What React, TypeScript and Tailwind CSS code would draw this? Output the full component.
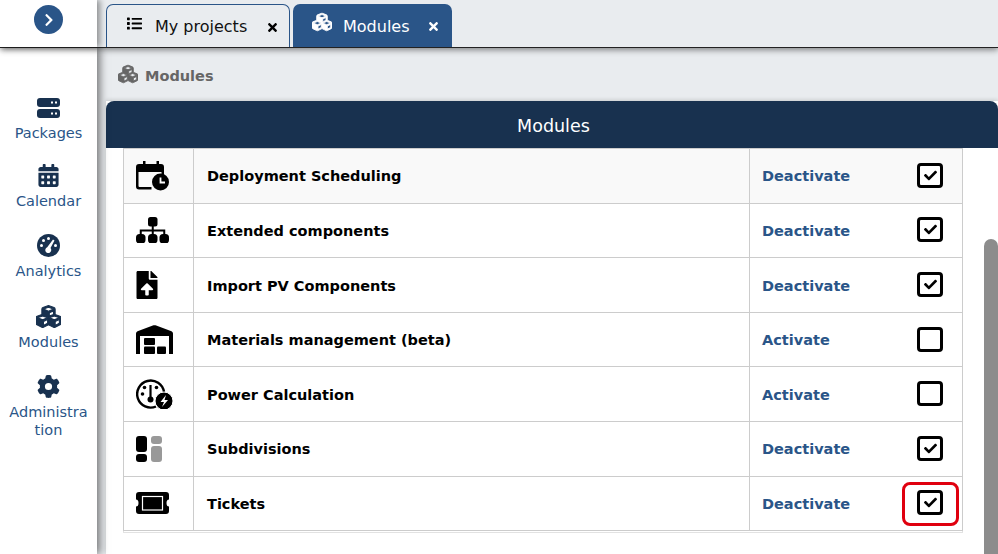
import { FaChevronRight, FaCubes, FaList, FaTimes, FaCalendarAlt, FaFileUpload, FaCheck } from "react-icons/fa";
import { FaGear } from "react-icons/fa6";

const navy = "#18314f";

function PackagesIcon() {
  return (
    <svg width="23" height="20" viewBox="0 0 23 20">
      <rect x="0" y="0" width="23" height="9" rx="3" fill={navy} />
      <rect x="0" y="11" width="23" height="9" rx="3" fill={navy} />
      <rect x="14" y="3.500" width="2" height="2" fill="#fff" />
      <rect x="18" y="3.500" width="2" height="2" fill="#fff" />
      <rect x="14" y="14.500" width="2" height="2" fill="#fff" />
      <rect x="18" y="14.500" width="2" height="2" fill="#fff" />
    </svg>
  );
}

function GaugeIcon() {
  return (
    <svg width="23" height="23" viewBox="0 0 23 23">
      <circle cx="11.500" cy="11.500" r="11.500" fill={navy} />
      <circle cx="11.500" cy="4.500" r="1.500" fill="#fff" />
      <circle cx="6.500" cy="6.500" r="1.500" fill="#fff" />
      <circle cx="4.500" cy="11.500" r="1.500" fill="#fff" />
      <circle cx="18.500" cy="11.500" r="1.500" fill="#fff" />
      <path d="M16 5.500 L17.500 6.500 L13.500 14 A3 3 0 1 1 10.200 13.200 Z" fill="#fff" />
    </svg>
  );
}

function CalendarClockIcon() {
  return (
    <svg width="33" height="30" viewBox="0 0 33 30">
      <path d="M7 0h2.500v3h11V0H23v3h2a3 3 0 0 1 3 3v8h-2.500v-3h-23v14a1 1 0 0 0 1 1h12v2.500H3a3 3 0 0 1-3-3V6a3 3 0 0 1 3-3h4z" fill="#000" />
      <circle cx="24.500" cy="21" r="8.500" fill="#000" />
      <path d="M24.500 16.500V21.500H29" stroke="#fff" strokeWidth="1.800" fill="none" />
    </svg>
  );
}

function SitemapIcon() {
  return (
    <svg width="33" height="26" viewBox="0 0 33 26">
      <rect x="12" y="0" width="9.500" height="9.500" rx="2.500" fill="#000" />
      <rect x="0" y="17" width="9.500" height="9.500" rx="3.500" fill="#000" />
      <rect x="12" y="17" width="9.500" height="9.500" rx="3.500" fill="#000" />
      <rect x="23.500" y="17" width="9.500" height="9.500" rx="3.500" fill="#000" />
      <path d="M16.750 9V18M4.750 18V13.500H28.250V18" stroke="#000" strokeWidth="2" fill="none" />
    </svg>
  );
}

function WarehouseIcon() {
  return (
    <svg width="37" height="29" viewBox="0 0 37 29">
      <path d="M0 8.500 Q0 7 1.500 6.300 L17.500 0.300 Q18.500 0 19.500 0.300 L35.500 6.300 Q37 7 37 8.500 V29 H33 V11 H4 V29 H0 Z" fill="#000" />
      <rect x="8" y="13" width="11" height="7" rx="1" fill="#000" />
      <rect x="8" y="21.500" width="11" height="7.500" rx="1" fill="#000" />
      <rect x="21" y="21.500" width="9" height="7.500" rx="1" fill="#000" />
    </svg>
  );
}

function PowerIcon() {
  return (
    <svg width="37" height="30" viewBox="0 0 37 30">
      <path d="M20 27.500 A13.500 13.500 0 1 1 28 13" stroke="#000" strokeWidth="2.400" fill="none" />
      <path d="M14.500 6 V20" stroke="#000" strokeWidth="2.200" />
      <circle cx="14.500" cy="20.500" r="3" fill="#000" />
      <circle cx="6.500" cy="15" r="1.800" fill="#000" />
      <circle cx="8.500" cy="8.500" r="1.800" fill="#000" />
      <circle cx="20.500" cy="8.500" r="1.800" fill="#000" />
      <circle cx="28" cy="22" r="9" fill="#000" stroke="#fff" strokeWidth="1" />
      <path d="M30 16 L24.500 23 H28 L26 28 L32 21 H28.500 Z" fill="#fff" />
    </svg>
  );
}

function SubdivisionsIcon() {
  return (
    <svg width="26" height="26" viewBox="0 0 26 26">
      <rect x="0" y="0" width="11" height="16" rx="3" fill="#000" />
      <rect x="0" y="18" width="11" height="8" rx="3" fill="#000" />
      <rect x="15" y="0" width="11" height="8" rx="3" fill="#999" />
      <rect x="15" y="10" width="11" height="16" rx="3" fill="#999" />
    </svg>
  );
}

function TicketIcon() {
  return (
    <svg width="33" height="22" viewBox="0 0 33 22">
      <path d="M3 0H30a3 3 0 0 1 3 3V7.500a2.500 3.500 0 0 0 0 7V19a3 3 0 0 1-3 3H3a3 3 0 0 1-3-3V14.500a2.500 3.500 0 0 0 0-7V3a3 3 0 0 1 3-3z" fill="#000" />
      <rect x="6.500" y="4.500" width="20" height="13.500" fill="#000" stroke="#fff" strokeWidth="1.200" />
    </svg>
  );
}

const nav = [
  { label: "Packages", icon: <PackagesIcon />, h: "h-[68px]" },
  { label: "Calendar", icon: <FaCalendarAlt size={23} color={navy} />, h: "h-[70px]" },
  { label: "Analytics", icon: <GaugeIcon />, h: "h-[71px]" },
  { label: "Modules", icon: <FaCubes size={25} color={navy} stroke={navy} strokeWidth={22} />, h: "h-[70px]" },
  { label: "Administra tion", icon: <FaGear size={23} color={navy} />, h: "h-[70px]" },
];

const rows = [
  { name: "Deployment Scheduling", icon: <CalendarClockIcon />, on: true },
  { name: "Extended components", icon: <SitemapIcon />, on: true },
  { name: "Import PV Components", icon: <FaFileUpload size={28} color="#000" className="-ml-[3px]" />, on: true },
  { name: "Materials management (beta)", icon: <WarehouseIcon />, on: false },
  { name: "Power Calculation", icon: <PowerIcon />, on: false },
  { name: "Subdivisions", icon: <SubdivisionsIcon />, on: true },
  { name: "Tickets", icon: <TicketIcon />, on: true, marked: true },
];

export default function App() {
  return (
    <div className="relative flex h-[554px] w-[998px] flex-col overflow-hidden bg-white font-['DejaVu_Sans',sans-serif]">
      <header className="relative z-20 flex h-[48px] shrink-0 border-b border-[#222] bg-[#e9ecef] shadow-[0_2px_6px_rgba(0,0,0,0.45)]">
        <div className="relative z-10 flex w-[97px] shrink-0 justify-center bg-white pt-[5px] shadow-[3px_0_6px_rgba(0,0,0,0.4)]">
          <div className="flex h-[29px] w-[29px] items-center justify-center rounded-full bg-[#2a5588]">
            <FaChevronRight size={14} color="#fff" />
          </div>
        </div>
        <div className="flex items-end gap-[3px] pl-[9px]">
          <div className="flex h-[43px] w-[184px] items-center rounded-t-[7px] border border-b-0 border-[#2a5588] bg-[#e9ecef] pt-[2px] text-[#111]">
            <FaList size={15} className="mb-[8px] ml-[20px]" color="#000" />
            <span className="ml-[13px] text-[16px]">My projects</span>
            <FaTimes size={13} className="ml-[19px]" color="#000" />
          </div>
          <div className="flex h-[43px] w-[159px] items-center rounded-t-[7px] bg-[#2a5588] pt-[2px] text-white">
            <FaCubes size={20} className="mb-[9px] ml-[19px]" color="#fff" stroke="#fff" strokeWidth={22} />
            <span className="ml-[11px] text-[16px]">Modules</span>
            <FaTimes size={13} className="ml-[17px]" color="#fff" />
          </div>
        </div>
      </header>

      <div className="flex min-h-0 flex-1">
        <aside className="relative z-10 flex w-[97px] shrink-0 flex-col items-center bg-white pt-[49px] text-center text-[14.5px] leading-[18px] text-[#2a5588] shadow-[3px_0_8px_rgba(0,0,0,0.5)]">
          {nav.map((item) => (
            <div key={item.label} className={`flex w-full flex-col items-center ${item.h}`}>
              <div className="flex h-[24px] items-center pb-[3px]">{item.icon}</div>
              <span className="mt-[3px] px-[5px]">
                {item.label === "Administra tion" ? (
                  <>
                    Administra
                    <br />
                    tion
                  </>
                ) : (
                  item.label
                )}
              </span>
            </div>
          ))}
        </aside>

        <main className="flex min-w-0 flex-1 flex-col bg-[#e9ecef]">
          <div className="flex h-[53px] shrink-0 items-center gap-[7px] pl-[21px] text-[14.5px] font-bold text-[#666]">
            <FaCubes size={20} color="#666" stroke="#666" strokeWidth={22} className="mb-[2px]" />
            <span className="mt-[4px]">Modules</span>
          </div>
          <div className="ml-[9px] flex min-h-0 flex-1 flex-col bg-white shadow-[0_-1px_4px_rgba(0,0,0,0.15)]">
            <div className="flex h-[47px] shrink-0 items-center justify-center rounded-t-[8px] bg-[#18314f] pl-[3px] pt-[4px] text-[17.5px] text-white">
              Modules
            </div>
            <div className="flex min-h-0 flex-1">
              <div className="w-[857px] shrink-0 pl-[17px]">
                <div className="border-t border-[#ccc]">
                  {rows.map((row, i) => (
                    <div
                      key={row.name}
                      className={`flex h-[54.6px] border-x border-b border-[#ccc] ${i === 0 ? "bg-[#f9f9f9]" : "bg-white"}`}
                    >
                      <div className="flex w-[70px] shrink-0 items-center border-r border-[#ccc] pl-[12px]">{row.icon}</div>
                      <div className="flex w-[556px] shrink-0 items-center border-r border-[#ccc] pl-[13px] pt-[3px] text-[14.5px] font-bold text-black">
                        {row.name}
                      </div>
                      <div className="flex flex-1 items-center pl-[12px] text-[14.5px] font-bold text-[#2a5588]">
                        <span className="mt-[3px]">{row.on ? "Deactivate" : "Activate"}</span>
                        <div className="flex-1" />
                        <div className="relative mb-[1px] mr-[19px] flex h-[25px] w-[26px] items-center justify-center rounded-[4px] border-[3px] border-black bg-white">
                          {row.on && <FaCheck size={13} color="#000" />}
                          {row.marked && (
                            <div className="absolute -left-[18px] -top-[11px] h-[44px] w-[57px] rounded-[8px] border-[3px] border-[#e0000f]" />
                          )}
                        </div>
                      </div>
                    </div>
                  ))}
                  <div className="h-[2px] border-x border-b border-[#e2e2e2]" />
                </div>
              </div>
              <div className="flex-1 pl-[21px] pt-[91px]">
                <div className="h-full w-[14px] rounded-t-[7px] bg-[#8c8c8c]" />
              </div>
            </div>
          </div>
        </main>
      </div>
    </div>
  );
}
